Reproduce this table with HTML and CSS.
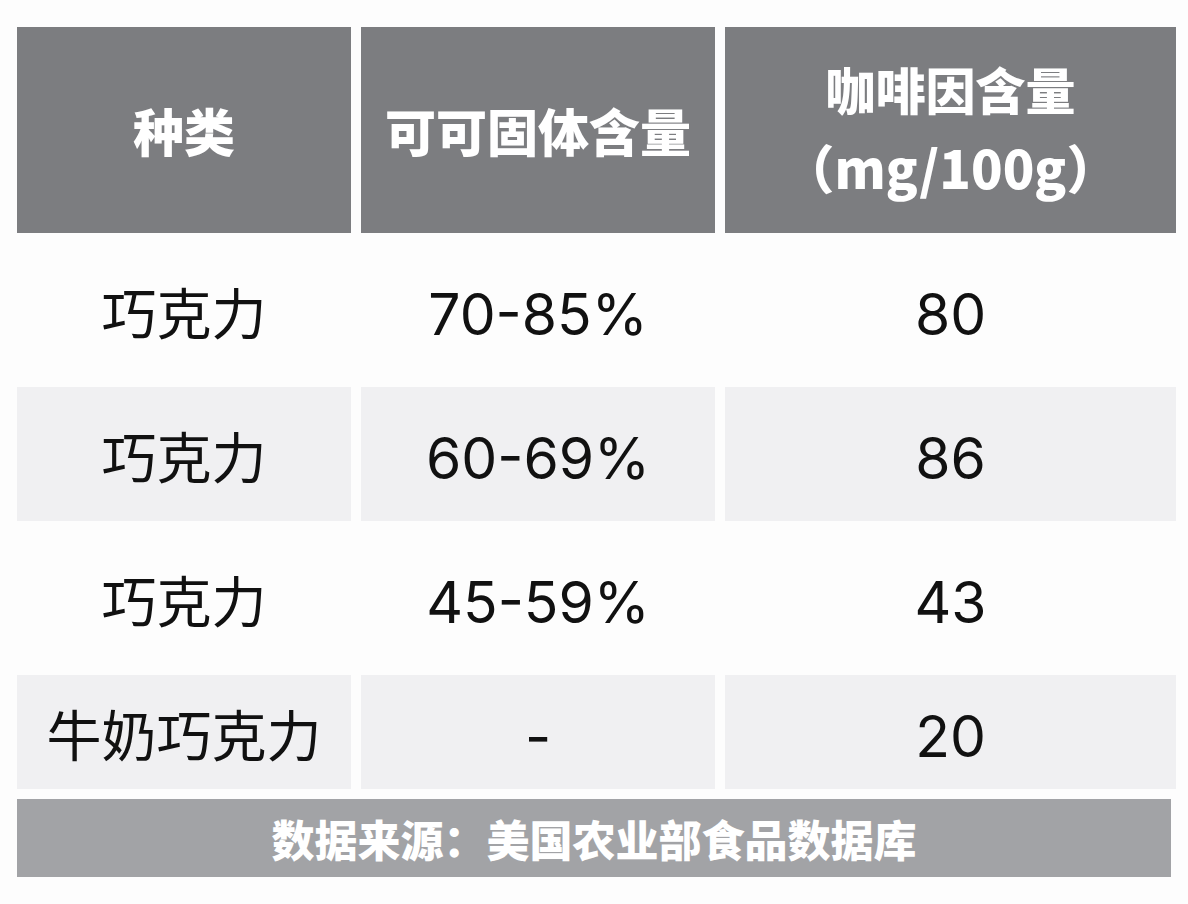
FILE: index.html
```html
<!DOCTYPE html>
<html lang="zh-CN">
<head>
<meta charset="utf-8">
<title>巧克力咖啡因含量</title>
<link rel="stylesheet" href="styles.css">
</head>
<body>
<main class="page">
  <div class="table">
    <div class="cell head">种类</div>
    <div class="cell head">可可固体含量</div>
    <div class="cell head head-two">
      <div class="lines">
        <div class="line">咖啡因含量</div>
        <div class="line unit">（mg/100g）</div>
      </div>
    </div>

    <div class="cell">巧克力</div>
    <div class="cell num">70-85%</div>
    <div class="cell num">80</div>

    <div class="cell alt">巧克力</div>
    <div class="cell alt num">60-69%</div>
    <div class="cell alt num">86</div>

    <div class="cell">巧克力</div>
    <div class="cell num">45-59%</div>
    <div class="cell num">43</div>

    <div class="cell alt">牛奶巧克力</div>
    <div class="cell alt num">-</div>
    <div class="cell alt num">20</div>
  </div>
  <div class="source">数据来源：美国农业部食品数据库</div>
</main>
</body>
</html>
```

FILE: styles.css
```css
html, body {
  margin: 0;
  padding: 0;
  background: #fdfdfd;
}

.page {
  width: 1188px;
  height: 904px;
  box-sizing: border-box;
  padding: 27px 0 0 17px;
  font-family: "Noto Sans CJK SC", "Noto Sans", sans-serif;
}

.table {
  display: grid;
  grid-template-columns: 334px 354px 451px;
  grid-template-rows: 206px 134px 134px 134px 114px;
  column-gap: 10px;
  row-gap: 10px;
}

.cell {
  display: flex;
  align-items: center;
  justify-content: center;
  text-align: center;
  font-size: 55px;
  color: #111;
  line-height: 1;
}

.cell.num {
  font-family: Inter, "Noto Sans CJK SC", sans-serif;
  font-size: 57px;
  padding-top: 8px;
}

.cell.alt {
  background: #f0f0f2;
}

.cell.head {
  background: #7c7d80;
  color: #fff;
  font-weight: 900;
  font-size: 51px;
}

.lines {
  display: flex;
  flex-direction: column;
  align-items: center;
  gap: 28px;
  padding-bottom: 4px;
}

.line {
  font-size: 50px;
  line-height: 1;
}

.line.unit {
  font-size: 52px;
}

.source {
  margin-top: 10px;
  width: 1154px;
  height: 78px;
  background: #a2a3a6;
  color: #fff;
  font-weight: 900;
  font-size: 43px;
  display: flex;
  align-items: center;
  justify-content: center;
}
```
